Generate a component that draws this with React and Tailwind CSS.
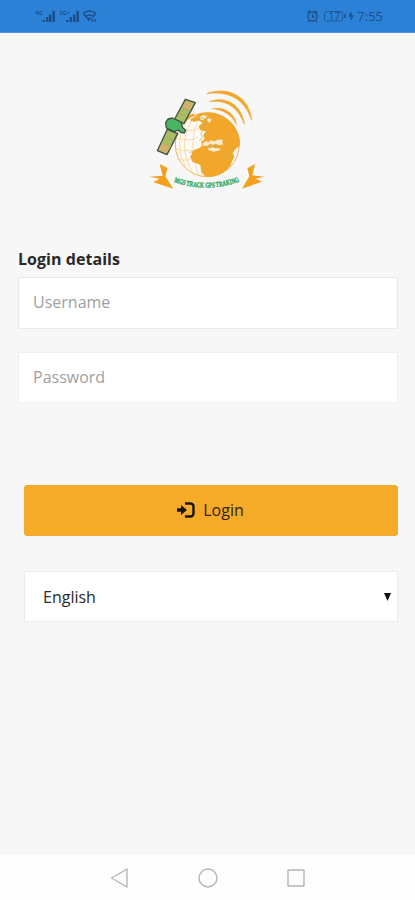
import React, { useState } from 'react';

function StatusBar() {
  return (
    <div className="flex h-[33px] items-center justify-between border-b border-[#4c92d6] bg-[#2b81d6] pl-[35px] pr-[32px] text-[#1c4f8a]">
      {/* Signal and wifi */}
      <svg className="h-[16px] w-[63px]" viewBox="0 0 63 16" fill="currentColor">
        <text x="0" y="7" fontSize="6" fontWeight="700" fontFamily="Open Sans, sans-serif">4G</text>
        <path d="M7.500 12h2.500v2H7.500zM11 9h2.500v5H11zM14 6.500h2.500V14H14zM17.500 3H20v11h-2.500z" />
        <text x="24" y="7" fontSize="6" fontWeight="700" fontFamily="Open Sans, sans-serif">3G+</text>
        <path d="M31 12h2.500v2H31zM34.500 9H37v5h-2.500zM38 6.500h2.500V14H38zM41.500 3H44v11h-2.500z" />
        <g fill="none" stroke="currentColor" strokeWidth="1.300">
          <path d="M48 5.500q6.500-5 13 0M50.500 8.500q4-3 8 0M52.500 11q2-1.500 4 0" />
          <path d="M48.500 5.500l6 7.500M60.500 5.500l-2.500 3.500M57.500 11v3M60 11v3" />
        </g>
      </svg>
      {/* Alarm, battery and clock */}
      <div className="flex items-center">
        <svg className="h-[14px] w-[50px]" viewBox="0 0 50 14" fill="none" stroke="currentColor">
          <circle cx="6.500" cy="7.500" r="4.500" strokeWidth="1.300" />
          <path d="M1.500 4l3-2.500M11.500 4l-3-2.500M6.500 5v3h2M3 11.500l-1 1.500M10 11.500l1 1.500" strokeWidth="1.300" />
          <rect x="18.500" y="2.500" width="18" height="9.500" rx="2" strokeWidth="0.800" />
          <path d="M39 5v4" strokeWidth="1.500" />
          <text x="22.500" y="11" fontSize="10" fill="currentColor" stroke="none" fontFamily="Open Sans, sans-serif">17</text>
          <path d="M45 3l-2 4.500h2V11l2.500-4.500h-2z" fill="currentColor" strokeWidth="0.500" />
        </svg>
        <span className="pl-px text-[13px] leading-none">7:55</span>
      </div>
    </div>
  );
}

function Logo() {
  return (
    <svg className="h-[120px] w-[135px]" viewBox="0 0 405 360">
      {/* Signal waves */}
      <g fill="#f3a62c">
        <path d="M200 41C260 17 328 47 335 121C315 58 266 31 200 41Z" stroke="#f3a62c" strokeWidth="2" />
        <path d="M208 65C255 47 305 72 313 133C294 81 258 58 208 65Z" stroke="#f3a62c" strokeWidth="2" />
        <path d="M211 87C248 75 286 96 291 137C275 105 248 88 211 87Z" />
      </g>
      {/* Globe */}
      <circle cx="202" cy="194" r="96" fill="#fdfaf3" stroke="#eeb65a" strokeWidth="3" />
      <g fill="none" stroke="#f2cc8c" strokeWidth="2">
        <path d="M108 173Q145 188 174 171M106 206Q128 217 154 211M115 238Q140 244 156 235M122 144Q146 158 177 145" />
        <path d="M166 107Q105 184 158 278M185 100Q136 180 177 288M140 125Q98 190 137 263" />
      </g>
      <path
        fill="#f3a62c"
        d="M177 101C221 89 266 107 287 145C299 166 302 184 298 199L286 207L278 219L283 230L276 244L272 256C252 283 225 293 197 290L184 277L181 255L157 245L151 230L160 211L178 204L186 198L184 184L194 177L190 164L198 154L181 151L176 139L187 128L175 121L164 126L149 120Z"
      />
      <g fill="#f7ead0">
        <path d="M188 190l10-7 8 4 6-6 12 3 10-6 15 2-3 8 5 5-14 3-10-5-8 4-8-4-10 7-12-1z" />
        <path d="M204 204l14-3 7 4 13-1 3 7-20 4-15-5z" />
        <path d="M179 112l10-7 13 3-8 10-11 3zM203 114l12 4-6 10-8-5z" />
      </g>
      <g fill="none" stroke="#a5b26a" strokeWidth="2">
        <path d="M174 121l13-8 14 8-4 12-12 5 9 11-12 10 6 12-10 12M198 200l12 4 13-5 14 4M225 182l13-7M248 214l12 15 12 8M276 199l10 10" />
        <path d="M151 124l12-7 11 3M158 214l-11 4M190 166l10-5" />
      </g>
      <path d="M132 126Q142 110 163 103" fill="none" stroke="#f3a62c" strokeWidth="7" />
      {/* Satellite */}
      <g stroke="#3f5142" strokeWidth="4" strokeLinejoin="round">
        <path d="M136 58L166 68L132 131L104 117Z" fill="#aabd66" />
        <path d="M82 148L113 161L81 224L52 212Z" fill="#aabd66" />
        <path d="M84 117L97 114L123 126L128 143L137 151L133 159L122 157L115 150L103 155L79 144L77 128Z" fill="#48b565" />
      </g>
      <g fill="#d0b16c">
        <path d="M138 63L161 70L149 92L126 82Z" />
        <path d="M67 186L94 198L79 220L57 210Z" />
      </g>
      <path d="M125 82l25 11M116 99l26 11M75 170l26 12M65 188l28 12" fill="none" stroke="#a39d5c" strokeWidth="1.500" />
      {/* Ribbon */}
      <g fill="#f3a01e">
        <path d="M59 252L83 264L76 289L100 326L40 307L59 296L27 290L68 287Z" />
        <path d="M345 252L322 265L328 289L306 326L366 305L347 296L373 290L337 286Z" />
      </g>
      <path id="ribbon" d="M102 306Q202 341 303 303" fill="none" />
      <text fontWeight="700" fontSize="22" fill="#35a95c" stroke="#35a95c" strokeWidth="1.200" fontFamily="Liberation Serif, serif">
        <textPath href="#ribbon" textLength="200" lengthAdjust="spacingAndGlyphs">MGS TRACK GPS TRAKING</textPath>
      </text>
    </svg>
  );
}

function LoginIcon() {
  return (
    <svg className="h-[16px] w-[18px]" viewBox="0 0 18 16" fill="none">
      <path d="M8 1.500h5.500a3 3 0 0 1 3 3v7a3 3 0 0 1-3 3H8" stroke="#17150f" strokeWidth="2.400" />
      <path d="M0 6.200h4V3l6 5-6 5V9.800H0z" fill="#17150f" />
    </svg>
  );
}

export default function App() {
  const [username, setUsername] = useState('');
  const [password, setPassword] = useState('');
  const [language, setLanguage] = useState('en');

  return (
    <div className="flex h-[900px] w-full flex-col overflow-hidden bg-[#f7f7f7] font-['Open_Sans',sans-serif]">
      <StatusBar />

      <main className="flex-1 pl-[18px] pr-[17px]">
        {/* Logo */}
        <div className="flex justify-center pr-px pt-[47px]">
          <Logo />
        </div>

        {/* Login Form */}
        <form onSubmit={(e) => e.preventDefault()}>
          <h1 className="mt-[48px] h-[29px] text-[16px] font-bold leading-[23px] tracking-[0.04px] text-[#292929]">Login details</h1>
          <input
            type="text"
            placeholder="Username"
            value={username}
            onChange={(e) => setUsername(e.target.value)}
            className="block h-[52px] w-full border border-[#e9e9e9] bg-white px-[14px] pb-[2px] text-[16px] outline-none placeholder:text-[#a0a0a0]"
          />
          <input
            type="password"
            placeholder="Password"
            value={password}
            onChange={(e) => setPassword(e.target.value)}
            className="mt-[23px] block h-[51px] w-full border border-[#f0f0f0] bg-white px-[14px] pb-[2px] text-[16px] outline-none placeholder:text-[#a0a0a0]"
          />

          <div className="pl-[6px]">
            <button
              type="submit"
              className="mt-[82px] flex h-[51px] w-full items-center justify-center gap-[8px] rounded-[3px] border border-[#eeaa32] bg-[#f5aa28] pb-[2px] pr-px text-[16px] text-[#30240f]"
            >
              <LoginIcon />
              Login
            </button>

            {/* Language */}
            <div className="mt-[35px] flex h-[51px] items-center border border-[#ececec] bg-white pl-[18px] pr-[6px]">
              <select
                value={language}
                onChange={(e) => setLanguage(e.target.value)}
                className="flex-1 appearance-none bg-transparent pt-px text-[16px] text-[#292929] outline-none"
              >
                <option value="en">English</option>
              </select>
              <svg className="h-[8px] w-[7px]" viewBox="0 0 7 8">
                <path d="M0 0h7L3.500 8z" fill="#111" />
              </svg>
            </div>
          </div>
        </form>
      </main>

      {/* Android navigation */}
      <nav className="flex h-[45px] items-center justify-center bg-[#fdfdfd]">
        <svg className="h-[22px] w-[200px]" viewBox="0 0 200 22" fill="none" stroke="#b5b5b5" strokeWidth="1.400" strokeLinejoin="round">
          <path d="M3.500 11L19 2V20Z" />
          <circle cx="100" cy="11" r="9" />
          <rect x="180" y="3" width="16" height="16" rx="0.500" />
        </svg>
      </nav>
    </div>
  );
}
